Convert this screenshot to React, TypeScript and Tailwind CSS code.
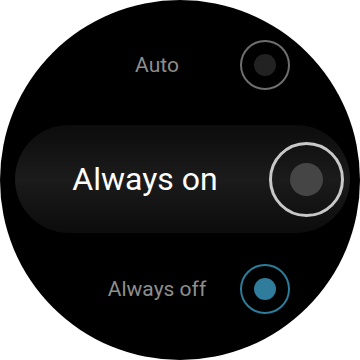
import React from 'react'

type Option = 'auto' | 'on' | 'off'

function Radio({ size, state }: { size: 'sm' | 'lg'; state: 'idle' | 'focus' | 'checked' }) {
  if (size === 'lg') {
    return (
      <div className="w-[75px] h-[75px] rounded-full border-[3px] border-[#c8c8c8] flex items-center justify-center shrink-0">
        <div className="w-[33px] h-[33px] rounded-full bg-[#454545]" />
      </div>
    )
  }
  const ring = state === 'checked' ? 'border-[#2c7c9c]' : 'border-[#6e6e6e]'
  const dot = state === 'checked' ? 'bg-[#2f7c9c]' : 'bg-[#222222]'
  return (
    <div className={`w-[50px] h-[50px] rounded-full border-2 ${ring} flex items-center justify-center shrink-0`}>
      <div className={`w-[22px] h-[22px] rounded-full ${dot}`} />
    </div>
  )
}

export default function App() {
  const selected: Option = 'off'

  return (
    <div className="w-[360px] h-[360px] bg-white" style={{ fontFamily: 'Roboto, "Noto Sans", sans-serif' }}>
      <div className="w-[360px] h-[360px] rounded-full bg-black overflow-hidden flex flex-col">
        {/* Auto */}
        <div className="flex items-center mt-[40px] ml-[84px]">
          <div className="w-[146px] text-center text-[21px] leading-none text-[#8e8e8e]">Auto</div>
          <div className="ml-[10px]">
            <Radio size="sm" state={selected === 'auto' ? 'checked' : 'idle'} />
          </div>
        </div>

        {/* focused row */}
        <div className="mt-[35px] ml-[15px] w-[335px] h-[108px] rounded-[54px] bg-gradient-to-b from-[#0c0c0c] via-[#1b1b1b] to-[#0c0c0c] flex items-center">
          <div className="ml-[30px] w-[200px] text-center text-[32px] leading-none text-white">Always on</div>
          <div className="ml-[24px]">
            <Radio size="lg" state="focus" />
          </div>
        </div>

        {/* Always off */}
        <div className="flex items-center mt-[31px] ml-[84px]">
          <div className="w-[146px] text-center text-[21px] leading-none text-[#8e8e8e]">Always off</div>
          <div className="ml-[10px]">
            <Radio size="sm" state={selected === 'off' ? 'checked' : 'idle'} />
          </div>
        </div>
      </div>
    </div>
  )
}
